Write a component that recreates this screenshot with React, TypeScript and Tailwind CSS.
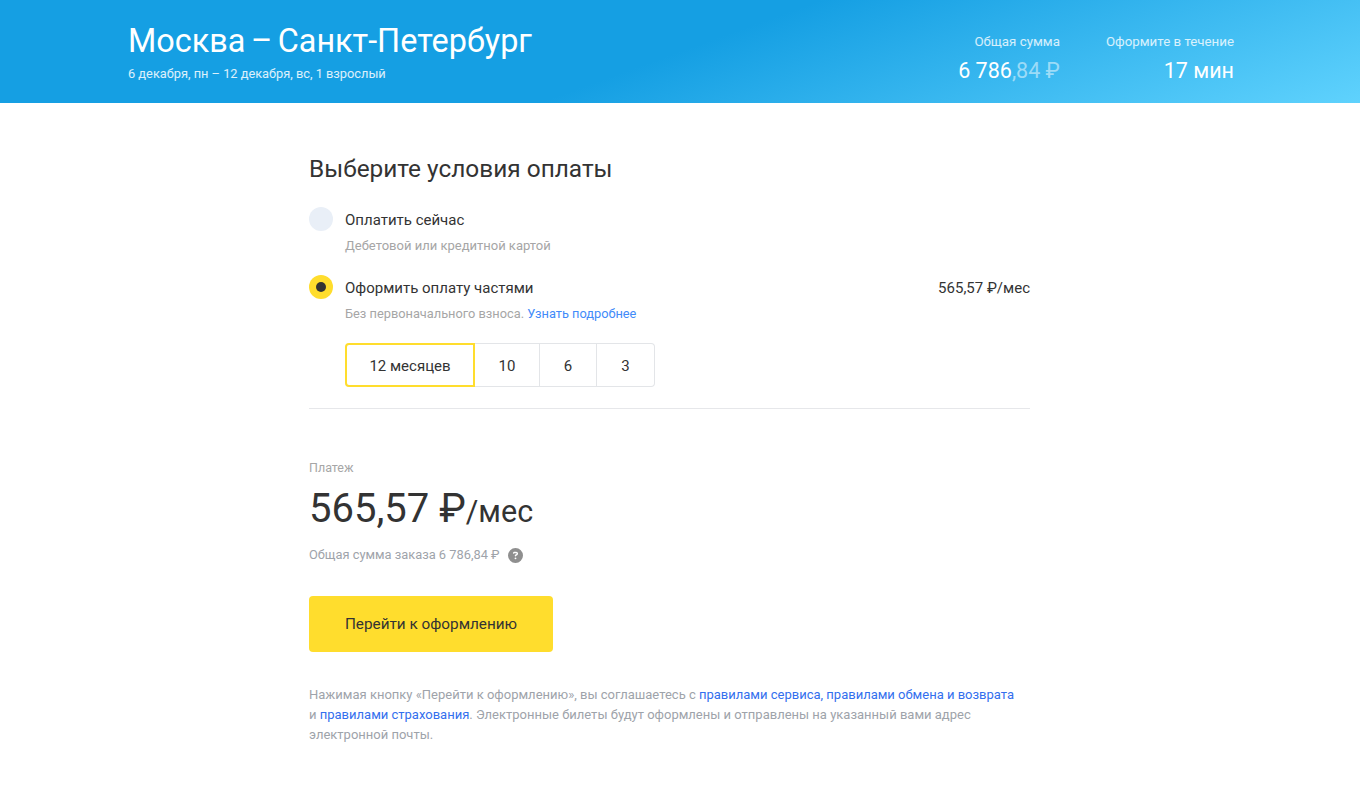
import { FaCircleQuestion } from "react-icons/fa6";

const terms = [
  { label: "10", width: "w-[65px]" },
  { label: "6", width: "w-[57px]" },
  { label: "3", width: "w-[58px]" },
];

function Header() {
  return (
    <header className="h-[103px] flex justify-between pl-[128px] pr-[126px] text-white bg-[linear-gradient(160deg,#159fe3_0%,#159fe3_50%,#5fd2fd_100%)]">
      <div className="pt-[22px]">
        <h1 className="text-[32.4px] leading-[38px] font-normal [word-spacing:-2.5px]">Москва – Санкт-Петербург</h1>
        <p className="mt-[6px] text-[12.8px] leading-[16px] text-white/85">6 декабря, пн – 12 декабря, вс, 1 взрослый</p>
      </div>
      <div className="flex gap-[46px] pt-[34px] text-right">
        <div>
          <div className="text-[13.3px] leading-[16px] text-white/80">Общая сумма</div>
          <div className="mt-[7px] text-[21.5px] leading-[28px]">
            6 786<span className="text-white/50">,84 ₽</span>
          </div>
        </div>
        <div>
          <div className="text-[13.3px] leading-[16px] text-white/80">Оформите в течение</div>
          <div className="mt-[7px] text-[21.5px] leading-[28px]">17 мин</div>
        </div>
      </div>
    </header>
  );
}

function PaymentOptions() {
  return (
    <div>
      <div className="flex gap-3 h-[24px] items-center">
        <span className="w-6 h-6 rounded-full bg-[#e9eff7]" />
        <span className="pt-[2px] text-[15px] text-[#333333]">Оплатить сейчас</span>
      </div>
      <p className="ml-9 mt-[7px] text-[13px] leading-[16px] text-[#a6a6a6]">Дебетовой или кредитной картой</p>

      <div className="flex gap-3 h-[24px] items-center mt-[21px]">
        <span className="w-6 h-6 rounded-full bg-[#ffdd2d] flex items-center justify-center">
          <span className="w-2.5 h-2.5 rounded-full bg-[#333333]" />
        </span>
        <span className="pt-[2px] text-[15px] text-[#333333]">Оформить оплату частями</span>
        <span className="ml-auto pt-[2px] text-[15px] text-[#333333]">565,57 ₽/мес</span>
      </div>
      <p className="ml-9 mt-[7px] text-[12.8px] leading-[16px] text-[#a6a6a6]">
        Без первоначального взноса. <span className="text-[#428bf9]">Узнать подробнее</span>
      </p>

      <div className="ml-9 mt-[21px] flex h-[44px] text-[15px] text-[#333333]">
        <div className="w-[130px] pt-[2px] rounded-l-[4px] border-2 border-[#ffdd2d] flex items-center justify-center">12 месяцев</div>
        {terms.map((t, i) => (
          <div
            key={t.label}
            className={
              t.width +
              " pt-[2px] border-y border-r border-[#e3e5e8] flex items-center justify-center " +
              (i === terms.length - 1 ? "rounded-r-[4px]" : "")
            }
          >
            {t.label}
          </div>
        ))}
      </div>
    </div>
  );
}

export default function App() {
  return (
    <div className="min-h-[807px] bg-white font-['Roboto','Liberation_Sans',sans-serif]">
      <Header />
      <main className="ml-[309px] w-[721px] pt-[50px]">
        <h2 className="text-[24.4px] leading-[32px] font-normal text-[#333333]">Выберите условия оплаты</h2>
        <div className="mt-[22px]">
          <PaymentOptions />
        </div>
        <div className="mt-[21px] h-px bg-[#e6e7ea]" />

        <p className="mt-[51px] text-[12.5px] leading-[16px] text-[#a6a6a6]">Платеж</p>
        <p className="mt-[8px] text-[40px] leading-[50px] text-[#333333]">
          565,57 ₽<span className="text-[30.5px]">/мес</span>
        </p>
        <div className="mt-[10px] flex items-center gap-2 text-[12.85px] leading-[16px] text-[#9ea3aa]">
          Общая сумма заказа 6 786,84 ₽
          <FaCircleQuestion className="w-[15px] h-[15px] text-[#8f8f8f]" />
        </div>

        <button className="mt-[33px] block w-[244px] h-[56px] rounded-[4px] bg-[#ffdd2d] text-[15.3px] text-[#333333]">
          Перейти к оформлению
        </button>

        <p className="mt-[33px] text-[13px] leading-[20px] text-[#9ea3aa]">
          Нажимая кнопку «Перейти к оформлению», вы соглашаетесь с{" "}
          <span className="text-[#336fee]">правилами сервиса, правилами обмена и возврата</span>
          <br />
          и <span className="text-[#336fee]">правилами страхования</span>. Электронные билеты будут оформлены и отправлены на указанный вами адрес
          <br />
          электронной почты.
        </p>
      </main>
    </div>
  );
}
